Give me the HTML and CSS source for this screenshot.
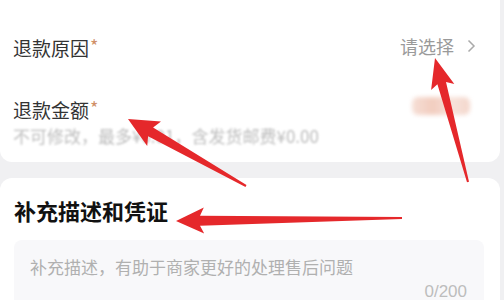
FILE: index.html
```html
<!DOCTYPE html>
<html lang="zh-CN">
<head>
<meta charset="utf-8">
<link rel="stylesheet" href="styles.css">
</head>
<body>
<div class="page">
  <section class="card card-top">
    <div class="row row-reason">
      <span class="label">退款原因<span class="req">*</span></span>
      <span class="picker">请选择<svg class="chev" width="9" height="14" viewBox="0 0 9 14"><path d="M1.5 1.5 L7 7 L1.5 12.5" fill="none" stroke="#aaa" stroke-width="1.5"/></svg></span>
    </div>
    <div class="row row-amount">
      <div class="amount-left">
        <div class="label">退款金额<span class="req">*</span></div>
        <div class="sub">不可修改，最多¥0.01，含发货邮费¥0.00</div>
      </div>
      <div class="amount-blur"></div>
    </div>
  </section>
  <section class="card card-desc">
    <h2 class="title">补充描述和凭证</h2>
    <div class="textarea">
      <div class="placeholder">补充描述，有助于商家更好的处理售后问题</div>
      <div class="counter">0/200</div>
    </div>
  </section>
  <svg class="arrows" width="504" height="300" viewBox="0 0 504 300">
    <polygon points="435,58 454.3,83.9 446,81.9 469,181.7 467,182.3 437.4,84.3 431.1,90.1" fill="#e5282b"/>
    <polygon points="128,119 161,121.6 153.1,127.5 246.5,185.1 245.5,186.9 148.1,136.2 147.2,146" fill="#e5282b"/>
    <polygon points="176,221 203.8,207.6 200,215.7 402,217 402,219 200,225.7 204.2,233.6" fill="#e5282b"/>
  </svg>
</div>
</body>
</html>
```
FILE: styles.css
```css
html, body {
  margin: 0;
  padding: 0;
}
body {
  background: #f0f0f2;
  font-family: "Noto Sans CJK SC", "Noto Sans", sans-serif;
  color: #333;
  width: 504px;
  height: 300px;
  overflow: hidden;
}
.page {
  position: relative;
  width: 504px;
  height: 300px;
}
.card {
  background: #fff;
  margin-right: 4px;
  border-radius: 12px;
}
.card-top {
  border-radius: 0 0 12px 12px;
  padding: 35px 0 18px 13px;
  height: 109px;
}
.row {
  display: flex;
  justify-content: space-between;
}
.row-reason {
  align-items: center;
  height: 22px;
  margin-bottom: 39px;
}
.label {
  font-size: 19px;
  line-height: 22px;
  color: #333;
}
.req {
  color: #d09068;
  font-size: 18px;
  vertical-align: 3px;
  margin-left: 1px;
}
.picker {
  display: flex;
  align-items: center;
  font-size: 18px;
  line-height: 22px;
  color: #9a9a9a;
  margin-right: 24px;
}
.chev {
  margin-left: 13px;
}
.row-amount {
  align-items: flex-start;
}
.sub {
  font-size: 17px;
  line-height: 22px;
  color: #bdbdbd;
  margin-top: 4px;
  filter: blur(0.8px);
}
.amount-blur {
  width: 58px;
  height: 18px;
  margin-top: 1px;
  margin-right: 30px;
  border-radius: 6px;
  background: linear-gradient(90deg, #f6dfd6 0%, #f2cdbf 35%, #f7e2da 70%, #f4d7cc 100%);
  filter: blur(2px);
}
.card-desc {
  margin-top: 16px;
  padding: 17px 16px 20px 14px;
}
.title {
  margin: 0;
  font-size: 22px;
  line-height: 30px;
  font-weight: 700;
  color: #111;
}
.textarea {
  margin-top: 15px;
  background: #f8f8fa;
  border-radius: 8px;
  padding: 16px 17px 10px 16px;
}
.placeholder {
  font-size: 17px;
  line-height: 22px;
  color: #b0b0b0;
}
.counter {
  margin-top: 6px;
  text-align: right;
  font-size: 17px;
  line-height: 16px;
  color: #bdbdbd;
  font-family: "Liberation Sans", sans-serif;
}
.arrows {
  position: absolute;
  left: 0;
  top: 0;
  pointer-events: none;
}
```
